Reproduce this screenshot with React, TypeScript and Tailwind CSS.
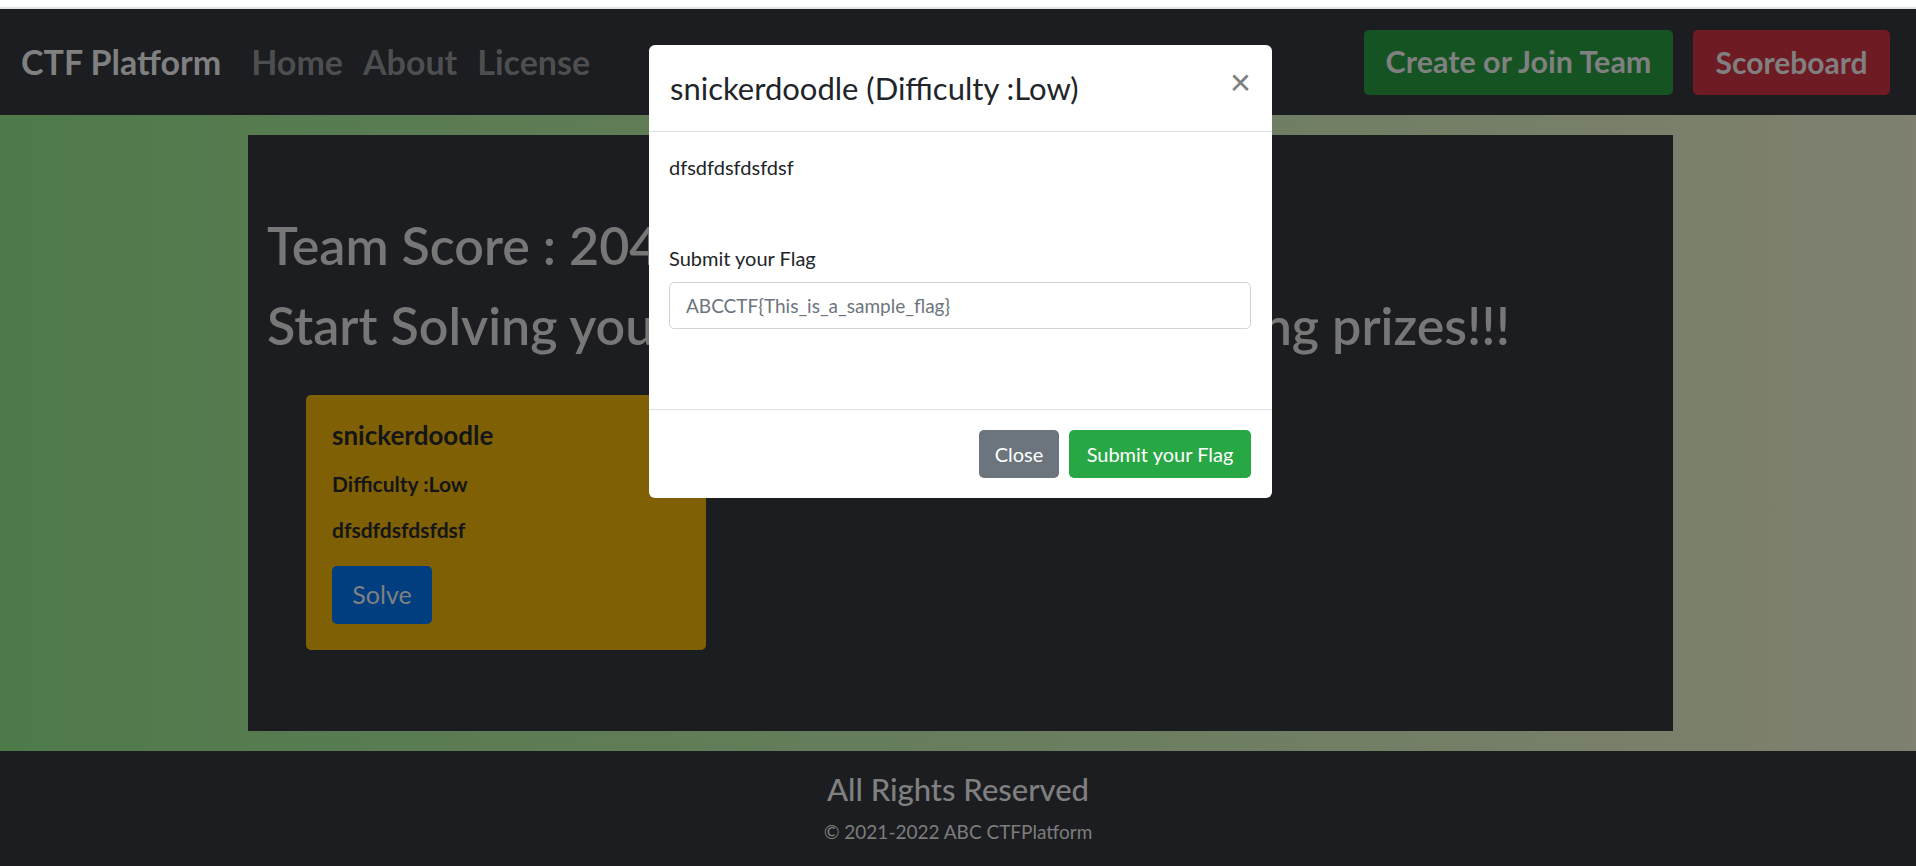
export default function App() {
  return (
    <div className="relative w-[1916px] h-[866px] overflow-hidden bg-white font-[family-name:Lato,sans-serif]">
      <div className="h-[9px] bg-white border-b-2 border-[#e2e2e2]" />
      <nav className="h-[106px] bg-[#1b1d20] flex items-center pl-[21px] pr-[26px]">
        <span className="text-[34px] font-bold text-[#808080] mr-[20px] leading-none">CTF Platform</span>
        <a className="px-[10px] text-[34px] font-bold text-[#4d4e50] leading-none">Home</a>
        <a className="px-[10px] text-[34px] font-bold text-[#4d4e50] leading-none">About</a>
        <a className="px-[10px] text-[34px] font-bold text-[#4d4e50] leading-none">License</a>
        <div className="ml-auto flex gap-[20px]">
          <button className="h-[65px] w-[309px] rounded-[5px] bg-[#155323] text-[30.5px] font-bold text-[#808080]">
            Create or Join Team
          </button>
          <button className="h-[65px] w-[197px] rounded-[5px] bg-[#6e1b23] text-[30px] font-bold text-[#808080]">
            Scoreboard
          </button>
        </div>
      </nav>
      <main className="h-[636px] bg-gradient-to-r from-[#4e7a4a] to-[#7f806f] pt-[20px]">
        <div className="ml-[248px] w-[1425px] h-[596px] bg-[#1b1d20] pl-[19px] pt-[80px]">
          <h1 className="text-[52px] leading-[60px] font-semibold text-[#777777] whitespace-nowrap">Team Score : 204</h1>
          <h1 className="mt-[20px] text-[52px] leading-[60px] font-semibold text-[#777777] whitespace-nowrap">
            Start Solving your challenges and win amazing prizes!!!
          </h1>
          <div className="ml-[39px] mt-[40px] w-[400px] h-[255px] rounded-[5px] bg-[#806004] pt-[25px] px-[26px] text-[#141517]">
            <h5 className="text-[26px] leading-[30px] font-bold">snickerdoodle</h5>
            <p className="mt-[19px] text-[21px] leading-[30px] font-bold">Difficulty :Low</p>
            <p className="mt-[16px] text-[21px] leading-[30px] font-bold">dfsdfdsfdsfdsf</p>
            <button className="mt-[21px] w-[100px] h-[58px] rounded-[5px] bg-[#003e80] text-[25px] text-[#808080]">
              Solve
            </button>
          </div>
        </div>
      </main>
      <footer className="h-[115px] bg-[#1b1d20] flex flex-col items-center pt-[20px]">
        <h4 className="text-[31px] leading-[36px] font-medium text-[#808080]">All Rights Reserved</h4>
        <p className="mt-[10px] text-[19px] leading-[30px] text-[#7d7d7d]">© 2021-2022 ABC CTFPlatform</p>
      </footer>

      <div className="absolute left-[649px] top-[45px] w-[623px] h-[453px] rounded-[6px] bg-white flex flex-col text-[#212529]">
        <div className="h-[87px] border-b border-[#dee2e6] flex items-center justify-between pl-[21px] pr-[21px]">
          <h5 className="text-[31px] leading-[40px]">snickerdoodle (Difficulty :Low)</h5>
          <span className="text-[36px] leading-none font-medium text-[#808080] -mt-[14px]">×</span>
        </div>
        <div className="h-[277px] px-[20px] pt-[20px]">
          <p className="text-[20px] leading-[30px]">dfsdfdsfdsfdsf</p>
          <label className="block mt-[61px] text-[20px] leading-[30px]">Submit your Flag</label>
          <input
            className="mt-[9px] block w-[582px] h-[47px] border border-[#ced4da] rounded-[5px] px-[16px] text-[19px] outline-none placeholder:text-[#6c757d]"
            placeholder="ABCCTF{This_is_a_sample_flag}"
          />
        </div>
        <div className="flex-1 border-t border-[#dee2e6] flex items-center justify-end gap-[10px] pr-[21px]">
          <button className="h-[48px] w-[80px] rounded-[5px] bg-[#6c757d] text-white text-[20px]">Close</button>
          <button className="h-[48px] w-[182px] rounded-[5px] bg-[#28a745] text-white text-[20px]">Submit your Flag</button>
        </div>
      </div>
    </div>
  );
}
